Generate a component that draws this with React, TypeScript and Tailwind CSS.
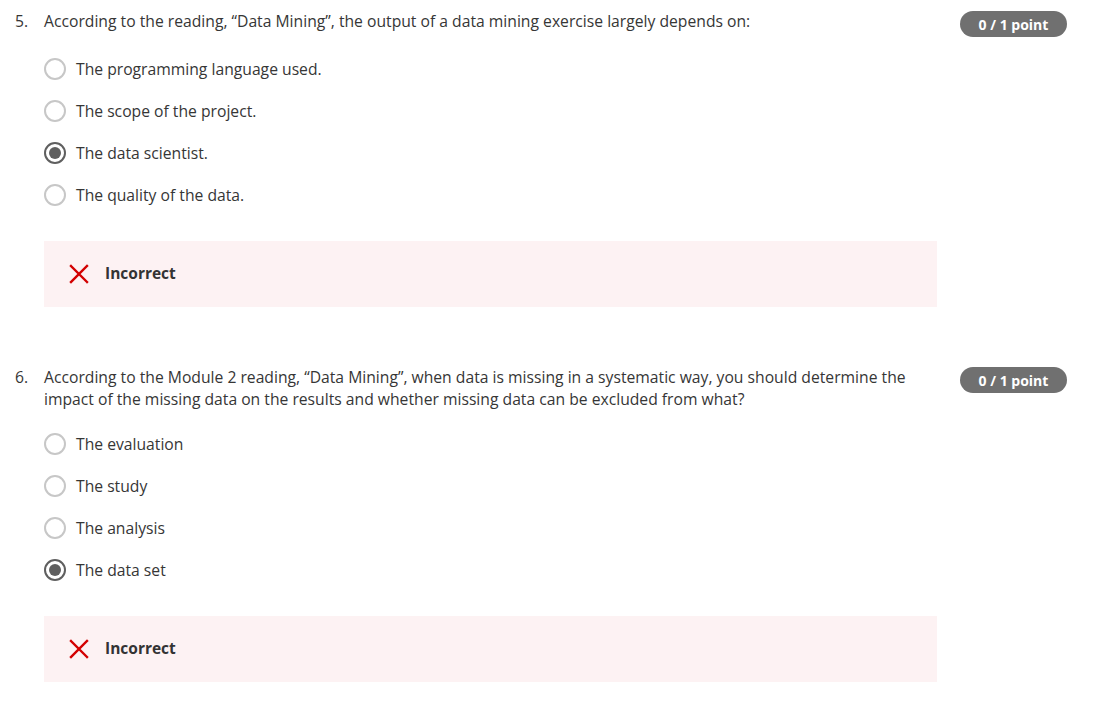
import React from 'react'

type Question = {
  num: number
  text: string
  options: string[]
  selected: number
  headerGap: string
}

const questions: Question[] = [
  {
    num: 5,
    text: 'According to the reading, \u201cData Mining\u201d, the output of a data mining exercise largely depends on:',
    options: ['The programming language used.', 'The scope of the project.', 'The data scientist.', 'The quality of the data.'],
    selected: 2,
    headerGap: 'mt-[26px]',
  },
  {
    num: 6,
    text: 'According to the Module 2 reading, \u201cData Mining\u201d, when data is missing in a systematic way, you should determine the impact of the missing data on the results and whether missing data can be excluded from what?',
    options: ['The evaluation', 'The study', 'The analysis', 'The data set'],
    selected: 3,
    headerGap: 'mt-[23px]',
  },
]

const Radio = ({ checked }: { checked: boolean }) =>
  checked ? (
    <span className="flex h-[22px] w-[22px] shrink-0 items-center justify-center rounded-full border-2 border-[#5f5f5f]">
      <span className="h-[12px] w-[12px] rounded-full bg-[#5f5f5f]" />
    </span>
  ) : (
    <span className="h-[22px] w-[22px] shrink-0 rounded-full border-2 border-[#c7c7c7]" />
  )

const XIcon = () => (
  <svg width="20" height="20" viewBox="0 0 20 20" className="shrink-0">
    <path d="M2 2 L18 18 M18 2 L2 18" stroke="#d30000" strokeWidth="2.4" strokeLinecap="square" />
  </svg>
)

const QuestionBlock = ({ q }: { q: Question }) => (
  <div className="flex items-start">
    <div className="w-[29px] shrink-0 text-[15.7px] leading-[22px]">{q.num}.</div>
    <div className="w-[893px] shrink-0">
      <p className="text-[15.7px] leading-[22px]">{q.text}</p>
      <div className={`flex flex-col gap-[20px] ${q.headerGap}`}>
        {q.options.map((o, i) => (
          <label key={o} className="flex items-center gap-[10px] text-[15.7px] leading-[22px]">
            <Radio checked={i === q.selected} />
            <span>{o}</span>
          </label>
        ))}
      </div>
      <div className="mt-[35px] flex h-[66px] items-center gap-[16px] bg-[#fdf2f3] pl-[25px]">
        <XIcon />
        <span className="text-[15.5px] font-bold text-[#333]">Incorrect</span>
      </div>
    </div>
    <div className="ml-auto mt-[1px] flex h-[26px] w-[107px] items-center justify-center rounded-full bg-[#707070] text-[14px] font-bold text-white">
      0 / 1 point
    </div>
  </div>
)

export default function App() {
  return (
    <div
      className="min-h-screen bg-white pl-[15px] pr-[52px] pt-[10px] text-[#363636]"
      style={{ fontFamily: '"Open Sans", "Noto Sans", sans-serif' }}
    >
      <div className="flex flex-col gap-[59px]">
        {questions.map((q) => (
          <QuestionBlock key={q.num} q={q} />
        ))}
      </div>
    </div>
  )
}
